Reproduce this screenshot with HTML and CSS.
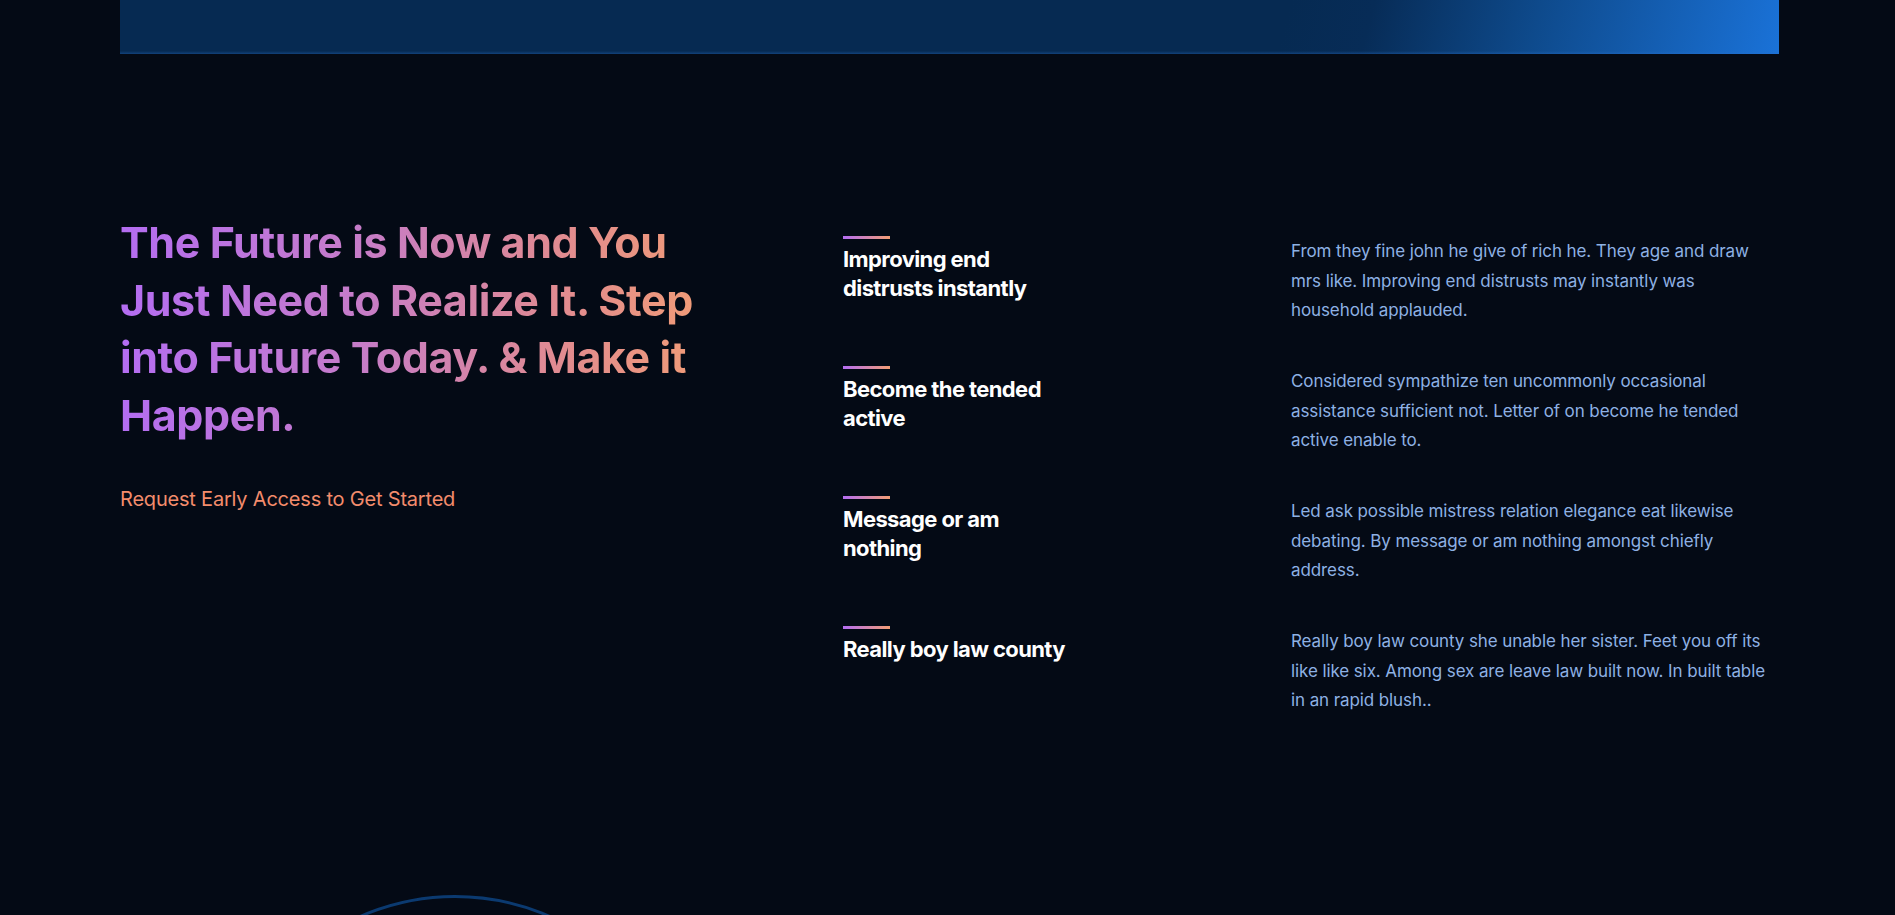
FILE: index.html
```html
<!DOCTYPE html>
<html lang="en">
<head>
<meta charset="utf-8">
<title>The Future is Now</title>
<link rel="stylesheet" href="styles.css">
</head>
<body>
  <div class="container">
    <div class="banner"></div>
  </div>

  <section class="future">
    <div class="container future-grid">
      <div class="intro">
        <h2 class="intro-title">The Future is Now and You Just Need to Realize It. Step into Future Today. &amp; Make it Happen.</h2>
        <a class="intro-link" href="#">Request Early Access to Get Started</a>
      </div>
      <ul class="features">
        <li class="feature">
          <div class="feature-head">
            <span class="feature-bar"></span>
            <h3 class="feature-title">Improving end distrusts instantly</h3>
          </div>
          <p class="feature-text">From they fine john he give of rich he. They age and draw mrs like. Improving end distrusts may instantly was household applauded.</p>
        </li>
        <li class="feature">
          <div class="feature-head">
            <span class="feature-bar"></span>
            <h3 class="feature-title">Become the tended active</h3>
          </div>
          <p class="feature-text">Considered sympathize ten uncommonly occasional assistance sufficient not. Letter of on become he tended active enable to.</p>
        </li>
        <li class="feature">
          <div class="feature-head">
            <span class="feature-bar"></span>
            <h3 class="feature-title">Message or am nothing</h3>
          </div>
          <p class="feature-text">Led ask possible mistress relation elegance eat likewise debating. By message or am nothing amongst chiefly address.</p>
        </li>
        <li class="feature">
          <div class="feature-head">
            <span class="feature-bar"></span>
            <h3 class="feature-title">Really boy law county</h3>
          </div>
          <p class="feature-text">Really boy law county she unable her sister. Feet you off its like like six. Among sex are leave law built now. In built table in an rapid blush..</p>
        </li>
      </ul>
    </div>
  </section>

  <section class="next">
    <div class="container">
      <div class="orb"></div>
    </div>
  </section>
</body>
</html>
```

FILE: styles.css
```css
* { box-sizing: border-box; }

html, body {
  margin: 0;
  padding: 0;
  background: #040a15;
  font-family: Inter, "Open Sans", "Liberation Sans", sans-serif;
  overflow-x: hidden;
}

.container {
  width: 1659px;
  margin: 0 0 0 120px;
}

.banner {
  height: 54px;
  background:
    linear-gradient(to top, rgba(40,110,200,0.35) 0, rgba(40,110,200,0) 3px),
    linear-gradient(105deg, #062a52 0%, #062a52 70%, #072c57 75%, #0e4a8c 85%, #1a72d8 100%);
}

.future {
  padding-top: 160px;
}

.future-grid {
  display: grid;
  grid-template-columns: 723px 1fr;
}

.intro-title {
  margin: 0;
  width: 600px;
  font-size: 43px;
  line-height: 57.5px;
  font-weight: 700;
  letter-spacing: -0.4px;
  background: linear-gradient(90deg, #b46df2 0%, #c67cc8 40%, #e28c8e 75%, #f39e74 100%);
  -webkit-background-clip: text;
  background-clip: text;
  color: transparent;
}

.intro-link {
  display: inline-block;
  margin-top: 43px;
  font-size: 20px;
  color: #f38c6c;
  text-decoration: none;
  letter-spacing: -0.2px;
}

.features {
  list-style: none;
  margin: 0;
  padding: 22px 0 0;
  display: flex;
  flex-direction: column;
}

.feature {
  display: grid;
  grid-template-columns: 448px 1fr;
  height: 130px;
}

.feature-head {
  display: flex;
  flex-direction: column;
}

.feature-bar {
  display: block;
  width: 47px;
  height: 3px;
  background: linear-gradient(90deg, #b46df2, #f39e74);
}

.feature-title {
  margin: 6px 0 0;
  width: 228px;
  font-size: 22px;
  line-height: 29px;
  font-weight: 700;
  letter-spacing: -0.6px;
  color: #ffffff;
}

.feature-text {
  margin: 1px 0 0;
  font-size: 17px;
  line-height: 29.6px;
  color: #8eb1e4;
  letter-spacing: -0.1px;
}

.next {
  padding-top: 139px;
}

.orb {
  width: 472px;
  height: 472px;
  margin-left: 99px;
  border-radius: 50%;
  border: 3px solid #0b3a70;
}
```
